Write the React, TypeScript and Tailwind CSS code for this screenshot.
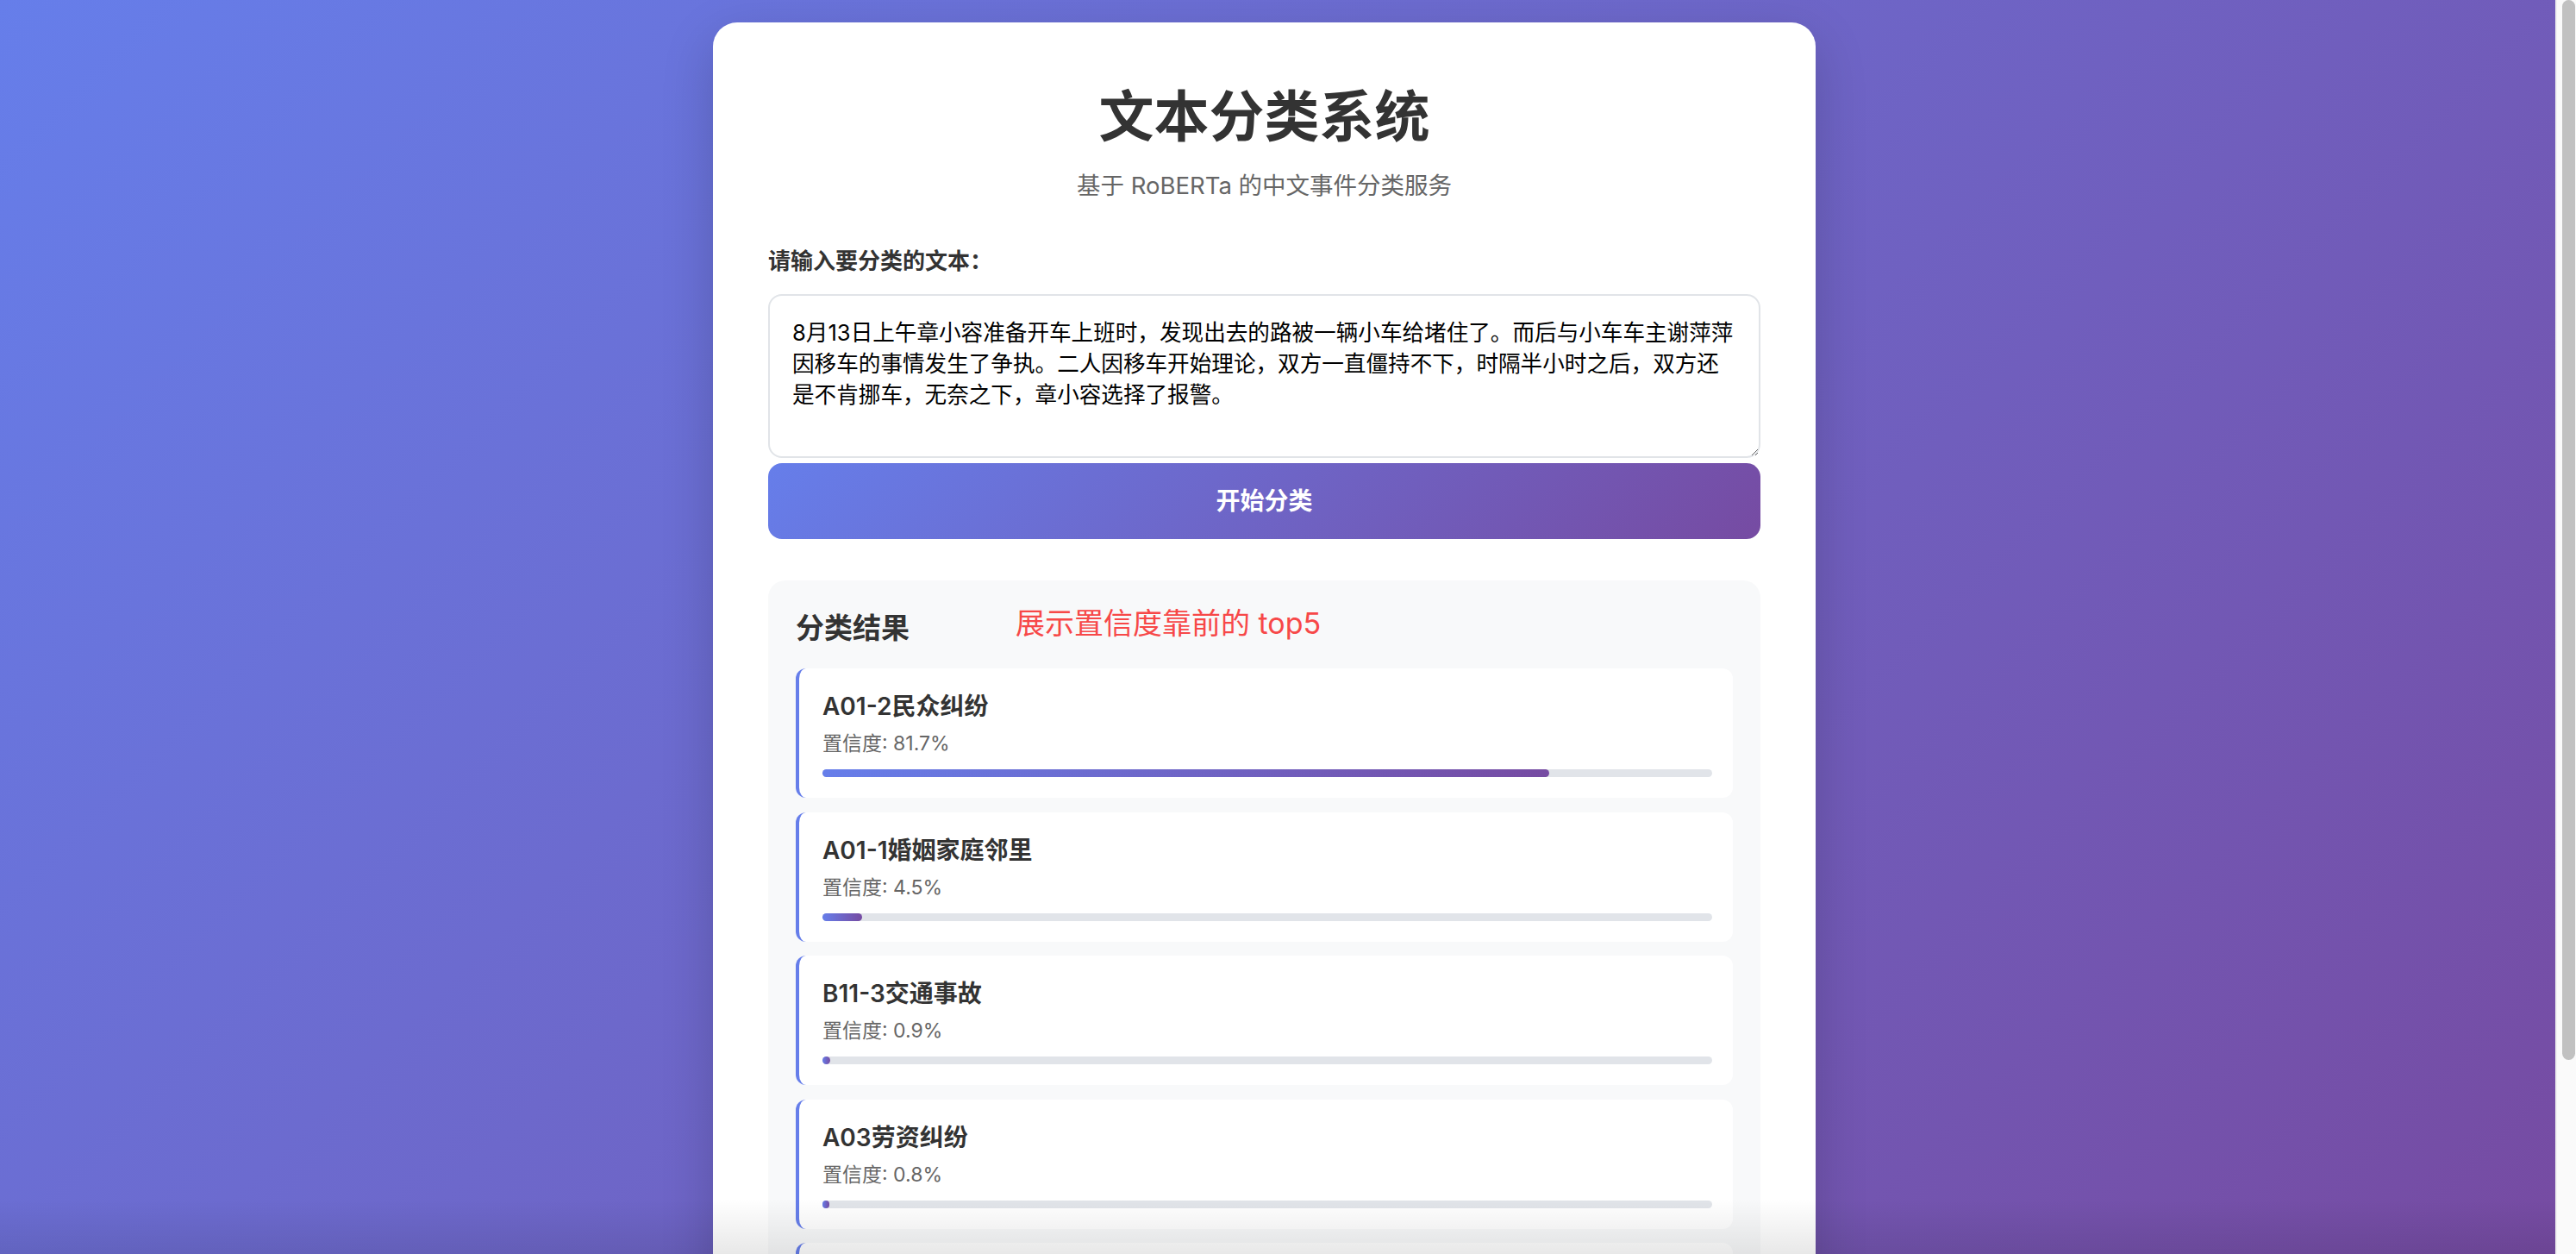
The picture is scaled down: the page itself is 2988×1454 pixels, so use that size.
import React from "react";

type Result = { label: string; confidence: number };

const results: Result[] = [
  { label: "A01-2民众纠纷", confidence: 81.7 },
  { label: "A01-1婚姻家庭邻里", confidence: 4.5 },
  { label: "B11-3交通事故", confidence: 0.9 },
  { label: "A03劳资纠纷", confidence: 0.8 },
  { label: "B11-1治安案件", confidence: 0.6 },
];

const inputText =
  "8月13日上午章小容准备开车上班时，发现出去的路被一辆小车给堵住了。而后与小车车主谢萍萍因移车的事情发生了争执。二人因移车开始理论，双方一直僵持不下，时隔半小时之后，双方还是不肯挪车，无奈之下，章小容选择了报警。";

function ResultItem({ r }: { r: Result }) {
  return (
    <div className="flex flex-col rounded-[12px] border-l-[4px] border-[#667eea] bg-white pl-[27px] pr-[24px] pt-[24px] pb-[24px]">
      <div className="text-[28px] leading-[40px] font-semibold text-[#333]">{r.label}</div>
      <div className="mt-[7px] text-[23px] leading-[32px] text-[#666]">置信度: {r.confidence}%</div>
      <div className="mt-[14px] h-[9px] w-full rounded-full bg-[#e1e4e9]">
        <div
          className="h-full rounded-full bg-[linear-gradient(90deg,#667eea,#764ba2)]"
          style={{ width: `${r.confidence}%` }}
        />
      </div>
    </div>
  );
}

export default function App() {
  return (
    <div className="flex h-[1454px] w-full overflow-hidden font-['Inter','Noto_Sans_CJK_SC',sans-serif]">
      <main className="relative flex flex-1 justify-center overflow-hidden bg-[linear-gradient(135deg,#667eea_0%,#764ba2_100%)] pr-[31px]">
        <div className="mt-[26px] flex h-fit w-[1279px] shrink-0 flex-col rounded-[28px] bg-white px-[64px] pt-[71px] pb-[64px] shadow-[0_20px_60px_rgba(0,0,0,0.18)]">
          <h1 className="text-center text-[64px] leading-[76px] font-bold text-[#333]">文本分类系统</h1>
          <p className="mt-[22px] text-center text-[27.5px] leading-[40px] text-[#666]">
            基于 RoBERTa 的中文事件分类服务
          </p>

          <label className="mt-[50px] text-[26px] leading-[36px] font-semibold text-[#333]">请输入要分类的文本：</label>
          <textarea
            className="mt-[20px] h-[190px] w-full rounded-[16px] border-[2px] border-[#e1e4e8] bg-white px-[26px] py-[25px] text-[25.6px] leading-[36px] text-black outline-none"
            defaultValue={inputText}
          />
          <button className="mt-[6px] h-[88px] w-full rounded-[16px] bg-[linear-gradient(135deg,#667eea_0%,#764ba2_100%)] text-[28px] font-semibold text-white">
            开始分类
          </button>

          <section className="mt-[48px] flex flex-col rounded-[20px] bg-[#f8f9fa] px-[32px] pt-[28px] pb-[32px]">
            <div className="flex items-center">
              <h2 className="text-[33px] leading-[44px] font-semibold text-[#333]">分类结果</h2>
              <span className="mb-[10px] ml-[123px] text-[34px] leading-[44px] text-[#f74848]">展示置信度靠前的 top5</span>
            </div>
            <div className="mt-[20px] flex flex-col gap-[16.5px]">
              {results.map((r) => (
                <ResultItem key={r.label} r={r} />
              ))}
            </div>
          </section>
        </div>
        <div className="pointer-events-none absolute right-0 bottom-0 left-0 h-[64px] bg-[linear-gradient(180deg,rgba(0,0,0,0)_0%,rgba(0,0,0,0.09)_100%)]" />
      </main>
      <div className="flex w-[24px] shrink-0 flex-col border-l-[2px] border-[#f0f0f0] bg-[#fafafa] pl-[6px] pr-[1px]">
        <div className="h-[1229px] w-full rounded-full bg-[#c1c1c1]" />
      </div>
    </div>
  );
}
